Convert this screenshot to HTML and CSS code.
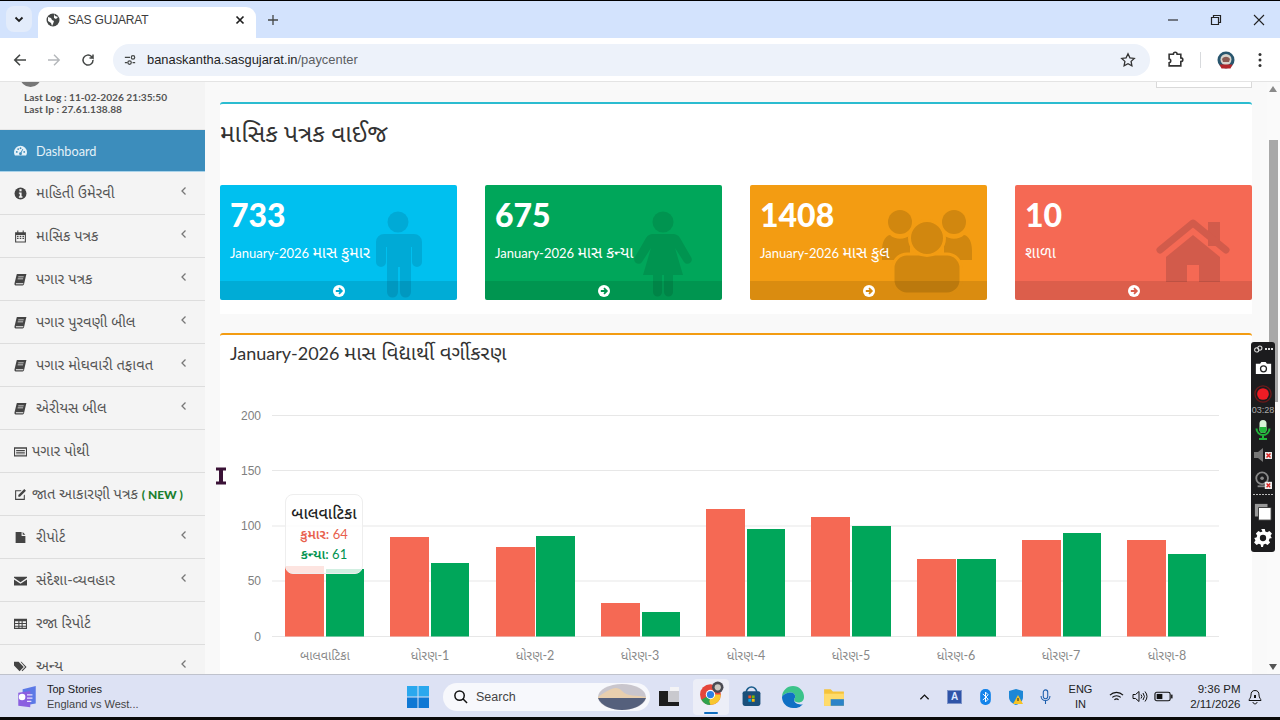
FILE: index.html
```html
<!DOCTYPE html>
<html lang="gu">
<head>
<meta charset="utf-8">
<title>SAS GUJARAT</title>
<link rel="stylesheet" href="styles.css">
</head>
<body>
<svg class="defs" aria-hidden="true">
  <symbol id="i-book" viewBox="0 0 12 12"><path d="M3 1h8.500l-.4 1.200L9.300 10.200c-.2.800-.6 1.300-1.400 1.300H1.600C.6 11.500.2 10.600.5 9.500L2.300 2C2.400 1.400 2.600 1 3 1zM4 3.200l-.2.800h5l.2-.800zM3.500 5l-.2.800h5l.2-.800zM1.800 9.400c-.2.600 0 .9.500.9h6.100l.3-.9z" fill-rule="evenodd"/></symbol>
  <symbol id="i-chev" viewBox="0 0 8 10"><path d="M5.500 1.500 2 5l3.500 3.500" fill="none" stroke="currentColor" stroke-width="1.300"/></symbol>
  <symbol id="i-go" viewBox="0 0 12 12"><circle cx="6" cy="6" r="6" fill="#fff"/><path d="M2.800 6h5.600M6 3.200 8.800 6 6 8.800" fill="none" stroke="currentColor" stroke-width="1.800"/></symbol>
</svg>

<div class="tabstrip">
  <div class="tab-menu"><svg viewBox="0 0 12 12" class="ic12"><path d="M2.500 4.500 6 8l3.500-3.500" fill="none" stroke="#1f1f1f" stroke-width="1.800"/></svg></div>
  <div class="tab">
    <svg viewBox="0 0 14 14" class="ic14"><circle cx="7" cy="7" r="6.500" fill="#444746"/><path d="M2 4l3 1 1 2 2 1-1 3-1 2-1-3-3-2zM8 1l1 2 3 1-2 2-2-1z" fill="#fff"/></svg>
    <span class="tab-title">SAS GUJARAT</span>
    <svg viewBox="0 0 10 10" class="ic10"><path d="M1.500 1.500l7 7m0-7l-7 7" stroke="#1f1f1f" stroke-width="1.700"/></svg>
  </div>
  <svg viewBox="0 0 12 12" class="tab-plus"><path d="M6 1v10M1 6h10" stroke="#444746" stroke-width="1.300"/></svg>
  <div class="win-ctrl">
    <svg viewBox="0 0 12 12" class="ic12"><path d="M1 6h10" stroke="#222" stroke-width="1.100"/></svg>
    <svg viewBox="0 0 12 12" class="ic12"><path d="M1.500 3.500h7v7h-7zM3.500 3.500v-2h7v7h-2" fill="none" stroke="#222" stroke-width="1.200"/></svg>
    <svg viewBox="0 0 12 12" class="ic12"><path d="M1 1l10 10M11 1L1 11" stroke="#222" stroke-width="1.100"/></svg>
  </div>
</div>

<div class="toolbar">
  <svg viewBox="0 0 14 14" class="ic14 nav"><path d="M13 7H2M7 1.800 1.800 7 7 12.200" fill="none" stroke="#444746" stroke-width="1.600"/></svg>
  <svg viewBox="0 0 14 14" class="ic14 nav"><path d="M1 7h11M7 1.800 12.200 7 7 12.200" fill="none" stroke="#b4b7ba" stroke-width="1.400"/></svg>
  <svg viewBox="0 0 14 14" class="ic14 nav"><path d="M12 7a5 5 0 1 1-1.500-3.500L12 5V1.500M12 5H8.500" fill="none" stroke="#444746" stroke-width="1.500"/></svg>
  <div class="omnibox">
    <span class="tune"><svg viewBox="0 0 14 14" class="ic14"><path d="M1 4h6M10 10h3M1 10h3" stroke="#444746" stroke-width="1.400"/><circle cx="10.500" cy="4" r="2" fill="none" stroke="#444746" stroke-width="1.400"/><circle cx="6.500" cy="10" r="2" fill="none" stroke="#444746" stroke-width="1.400"/></svg></span>
    <span class="url">banaskantha.sasgujarat.in<span class="url-path">/paycenter</span></span>
    <svg viewBox="0 0 16 16" class="star"><path d="M8 1.800l1.900 4 4.400.6-3.200 3 .8 4.400L8 11.700l-3.900 2.100.8-4.400-3.200-3 4.400-.6z" fill="none" stroke="#333" stroke-width="1.300"/></svg>
  </div>
  <svg viewBox="0 0 16 16" class="puzzle"><path d="M2 3h4c0-2.500 3.500-2.500 3.500 0h3.500v3.500c2.500 0 2.500 3.500 0 3.500V14H2v-3c2 0 2-3.500 0-3.500z" fill="none" stroke="#333" stroke-width="1.500"/></svg>
  <span class="tool-sep"></span>
  <svg viewBox="0 0 18 18" class="avatar"><circle cx="9" cy="9" r="8.500" fill="#29566e"/><circle cx="9" cy="8.500" r="5.500" fill="#d8d4cc"/><path d="M5 8c2-3 6-3 8 0l-1 3H6z" fill="#8a5a52"/><path d="M2.500 13.500h13l-2 4h-9z" fill="#b3262a"/></svg>
  <svg viewBox="0 0 4 16" class="dots"><circle cx="2" cy="2.500" r="1.500" fill="#333"/><circle cx="2" cy="8" r="1.500" fill="#333"/><circle cx="2" cy="13.500" r="1.500" fill="#333"/></svg>
</div>

<div class="page">
  <aside class="sidebar">
    <div class="user">
      <span class="user-pic"></span>
      <p>Last Log : 11-02-2026 21:35:50</p>
      <p>Last Ip : 27.61.138.88</p>
    </div>
    <ul class="menu">
      <li class="item active"><svg viewBox="0 0 14 12" class="mi"><path d="M7 1a7 7 0 0 0-7 7c0 1.300.4 2.500 1 3.500h12c.6-1 1-2.200 1-3.500a7 7 0 0 0-7-7z"/><g fill="#3c8dbc"><circle cx="3" cy="7.500" r="1"/><circle cx="4.500" cy="4.500" r="1"/><circle cx="7" cy="3.500" r="1"/><circle cx="11" cy="7.500" r="1"/><circle cx="7" cy="9.500" r="1.500"/></g><path d="M7 9.500l2.500-5" stroke="#3c8dbc" stroke-width="1"/></svg><span class="lbl">Dashboard</span></li>
      <li class="item"><svg viewBox="0 0 12 12" class="mi"><circle cx="6" cy="6" r="5.500"/><rect x="5" y="2" width="2" height="2" fill="#f4f4f4"/><path d="M4.500 5H7v3.500h.8V10H4.500V8.500h.8V6.300h-.8z" fill="#f4f4f4"/></svg><span class="lbl">માહિતી ઉમેરવી</span><svg class="chev"><use href="#i-chev"/></svg></li>
      <li class="item"><svg viewBox="0 0 12 12" class="mi"><path d="M1 2h2V.500h1V2h4V.500h1V2h2v9.500H1zM2 4.500v6h8v-6z" fill-rule="evenodd"/><path d="M2.800 5.300h1.400v1.200H2.800zm2.500 0h1.400v1.200H5.300zm2.500 0h1.400v1.200H7.800zM2.800 7.200h1.400v1.200H2.800zm2.500 0h1.400v1.200H5.300zm2.500 0h1.400v1.200H7.800z"/></svg><span class="lbl">માસિક પત્રક</span><svg class="chev"><use href="#i-chev"/></svg></li>
      <li class="item"><svg class="mi"><use href="#i-book"/></svg><span class="lbl">પગાર પત્રક</span><svg class="chev"><use href="#i-chev"/></svg></li>
      <li class="item"><svg class="mi"><use href="#i-book"/></svg><span class="lbl">પગાર પુરવણી બીલ</span><svg class="chev"><use href="#i-chev"/></svg></li>
      <li class="item"><svg class="mi"><use href="#i-book"/></svg><span class="lbl">પગાર મોઘવારી તફાવત</span><svg class="chev"><use href="#i-chev"/></svg></li>
      <li class="item"><svg class="mi"><use href="#i-book"/></svg><span class="lbl">એરીયસ બીલ</span><svg class="chev"><use href="#i-chev"/></svg></li>
      <li class="item tight"><svg viewBox="0 0 12 12" class="mi"><path d="M0 2h12v8.500H0zM1 3.500v6h10v-6z" fill-rule="evenodd"/><path d="M2 4.500h8v1H2zm0 1.700h8v1H2zm0 1.600h8v.8H2z"/></svg><span class="lbl">પગાર પોથી</span></li>
      <li class="item tight"><svg viewBox="0 0 12 12" class="mi"><path d="M1.500 2H7L6 3H2v7h7V7l1-1v5H1V2z"/><path d="M4 6.500 9.500 1 11 2.500 5.500 8H4z"/></svg><span class="lbl">જાત આકારણી પત્રક <b class="new">( NEW )</b></span></li>
      <li class="item"><svg viewBox="0 0 12 12" class="mi"><path d="M1.500 1H7v3.500h3.500V11h-9zM8 1l2.500 2.500H8z"/></svg><span class="lbl">રીપોર્ટ</span><svg class="chev"><use href="#i-chev"/></svg></li>
      <li class="item"><svg viewBox="0 0 12 12" class="mi"><path d="M0 2.500h12v1L6 7.500 0 3.500zM0 5l6 4 6-4v5.500H0z"/></svg><span class="lbl">સંદેશા-વ્યવહાર</span><svg class="chev"><use href="#i-chev"/></svg></li>
      <li class="item"><svg viewBox="0 0 12 12" class="mi"><path d="M0 1.500h12v9.500H0zM1 4v1.500h3V4zm4 0v1.500h2V4zm3 0v1.500h3V4zM1 6.500V8h3V6.500zm4 0V8h2V6.500zm3 0V8h3V6.500zM1 9v1h3V9zm4 0v1h2V9zm3 0v1h3V9z" fill-rule="evenodd"/></svg><span class="lbl">રજા રિપોર્ટ</span></li>
      <li class="item"><svg viewBox="0 0 14 12" class="mi"><path d="M0 1h5l5.500 5.500-4.500 4.500L0 5zM7 1h1l5.500 5.500-4.500 4.500-.8-.8 3.700-3.700z"/></svg><span class="lbl">અન્ય</span><svg class="chev"><use href="#i-chev"/></svg></li>
    </ul>
  </aside>

  <main class="content">
    <div class="top-stub"><span class="stub-box"></span></div>

    <section class="panel panel-teal">
      <h1 class="panel-h1">માસિક પત્રક વાઈજ</h1>
      <div class="cards">
        <article class="card c-blue">
          <svg viewBox="0 0 237 115" class="art"><circle cx="178" cy="37" r="10.500"/><path d="M162 49h32a8 8 0 0 1 8 8v20a5 5 0 0 1-10 0V62h-1v45a5.500 5.500 0 0 1-11 0V82h-2v25a5.500 5.500 0 0 1-11 0V62h-1v15a5 5 0 0 1-10 0V57a8 8 0 0 1 8-8z"/></svg>
          <div class="card-body"><div class="num">733</div><div class="cap">January-2026 <span class="gu">માસ કુમાર</span></div></div>
          <div class="card-foot"><svg class="go"><use href="#i-go"/></svg></div>
        </article>
        <article class="card c-green">
          <svg viewBox="0 0 237 115" class="art"><circle cx="178" cy="37" r="10.500"/><path d="M168 49h20c3 0 5 1 7 4l11 19a4 4 0 0 1-7 5l-9-14 8 27h-10v17a4.500 4.500 0 0 1-9 0V90h-2v17a4.500 4.500 0 0 1-9 0V90h-10l8-27-9 14a4 4 0 0 1-7-5l11-19c2-3 4-4 7-4z"/></svg>
          <div class="card-body"><div class="num">675</div><div class="cap">January-2026 <span class="gu">માસ કન્યા</span></div></div>
          <div class="card-foot"><svg class="go"><use href="#i-go"/></svg></div>
        </article>
        <article class="card c-amber">
          <svg viewBox="0 0 237 115" class="art"><circle cx="150" cy="37" r="12"/><circle cx="204" cy="37" r="12"/><path d="M132 66c0-9 3-15 8-16 5 5 15 5 20 0v25h-28zM194 50c5 5 15 5 20 0 5 1 8 7 8 16v9h-28z"/><rect x="143" y="69" width="68" height="40" rx="14" class="ring"/><circle cx="177" cy="53" r="17.500" class="ring"/></svg>
          <div class="card-body"><div class="num">1408</div><div class="cap">January-2026 <span class="gu">માસ કુલ</span></div></div>
          <div class="card-foot"><svg class="go"><use href="#i-go"/></svg></div>
        </article>
        <article class="card c-red">
          <svg viewBox="0 0 237 115" class="art"><rect x="193" y="37" width="12" height="24"/><path d="M178 50l27 22v25h-21V80h-12v17h-21V72z"/><path d="M145 65l33-27 33 27" class="roof"/></svg>
          <div class="card-body"><div class="num">10</div><div class="cap"><span class="gu">શાળા</span></div></div>
          <div class="card-foot"><svg class="go"><use href="#i-go"/></svg></div>
        </article>
      </div>
    </section>

    <section class="panel panel-amber">
      <h2 class="panel-h2">January-2026 <span class="gu-h">માસ વિદ્યાર્થી વર્ગીકરણ</span></h2>
      <div class="chart">
        <svg viewBox="0 0 1032 300" class="chart-svg">
          <g class="grid">
            <path d="M52 35.500H999M52 90.500H999M52 146H999M52 201H999M52 256.500H999"/>
          </g>
          <g class="ticks">
            <text x="41" y="40">200</text><text x="41" y="95">150</text><text x="41" y="150">100</text><text x="41" y="205">50</text><text x="41" y="261">0</text>
          </g>
          <g class="red">
            <rect x="65" y="186" width="39" height="70.500"/><rect x="170" y="157" width="39" height="99.500"/><rect x="276" y="167" width="39" height="89.500"/><rect x="381" y="223" width="39" height="33.500"/><rect x="486" y="129" width="39" height="127.500"/><rect x="591" y="137" width="39" height="119.500"/><rect x="697" y="179" width="39" height="77.500"/><rect x="802" y="160" width="39" height="96.500"/><rect x="907" y="160" width="39" height="96.500"/>
          </g>
          <g class="green">
            <rect x="106" y="189" width="38" height="67.500"/><rect x="211" y="183" width="38" height="73.500"/><rect x="316" y="156" width="39" height="100.500"/><rect x="422" y="232" width="38" height="24.500"/><rect x="527" y="149" width="38" height="107.500"/><rect x="632" y="146" width="39" height="110.500"/><rect x="737" y="179" width="39" height="77.500"/><rect x="843" y="153" width="38" height="103.500"/><rect x="948" y="174" width="38" height="82.500"/>
          </g>
          <g class="xlabels">
            <text x="105" y="280">બાલવાટિકા</text><text x="210" y="280">ધોરણ-1</text><text x="315" y="280">ધોરણ-2</text><text x="420" y="280">ધોરણ-3</text><text x="526" y="280">ધોરણ-4</text><text x="631" y="280">ધોરણ-5</text><text x="736" y="280">ધોરણ-6</text><text x="841" y="280">ધોરણ-7</text><text x="947" y="280">ધોરણ-8</text>
          </g>
        </svg>
        <div class="tooltip">
          <div class="tt-title">બાલવાટિકા</div>
          <div class="tt-row tt-red">કુમાર: <span>64</span></div>
          <div class="tt-row tt-green">કન્યા: <span>61</span></div>
        </div>
      </div>
    </section>
  </main>

  <div class="scrollbar">
    <span class="sb-up"></span>
    <span class="sb-thumb"></span>
    <span class="sb-down"></span>
  </div>

  <svg viewBox="0 0 12 18" class="ibeam"><path d="M1 .500h10v3H8v11h3v3H1v-3h3v-11H1z" fill="#3a1236"/></svg>

  <div class="recorder">
    <div class="rec-top"><svg viewBox="0 0 10 8" class="rec-link"><circle cx="3" cy="5" r="2.300" fill="none" stroke="#ddd" stroke-width="1.200"/><circle cx="6.500" cy="3" r="2.300" fill="none" stroke="#ddd" stroke-width="1.200"/></svg><span class="rec-dots"></span></div>
    <svg viewBox="0 0 20 16" class="rec-i"><path d="M1 3h5l1.500-2h5L14 3h5v12H1z" fill="#fff"/><circle cx="10" cy="9" r="3.500" fill="none" stroke="#222" stroke-width="1.500"/></svg>
    <svg viewBox="0 0 20 20" class="rec-i rec-r"><circle cx="10" cy="10" r="9" fill="none" stroke="#6b1a1a" stroke-width="1.500"/><circle cx="10" cy="10" r="6.500" fill="#ee1c25"/></svg>
    <span class="rec-time">03:28</span>
    <svg viewBox="0 0 20 20" class="rec-i rec-m"><rect x="6.500" y="0" width="7" height="13" rx="3.500" fill="#d8f5d8"/><path d="M6.500 7h7v2.500a3.500 3.500 0 0 1-7 0z" fill="#22b53b"/><path d="M3.500 8.500a6.500 6.500 0 0 0 13 0M10 15v4M6 19h8" fill="none" stroke="#22b53b" stroke-width="2"/></svg>
    <svg viewBox="0 0 20 16" class="rec-i rec-s"><path d="M1 5h4l5-4v14l-5-4H1z" fill="#777"/><rect x="12" y="5" width="7" height="7" fill="#e8e8e8"/><path d="M13.500 6.500l4 4m0-4l-4 4" stroke="#d22" stroke-width="1.500"/></svg>
    <svg viewBox="0 0 20 20" class="rec-i rec-c"><circle cx="9" cy="8" r="6.500" fill="none" stroke="#888" stroke-width="2"/><circle cx="9" cy="8" r="2" fill="#888"/><path d="M4 17h10" stroke="#888" stroke-width="2"/><rect x="12" y="12" width="8" height="8" fill="#eee"/><path d="M14 14l4 4m0-4l-4 4" stroke="#d22" stroke-width="1.500"/></svg>
    <span class="rec-rule"></span>
    <svg viewBox="0 0 20 20" class="rec-i rec-w"><path d="M1 1h14v14H1z" fill="#999"/><path d="M5 5h14v14H5z" fill="#fff" stroke="#333"/></svg>
    <svg viewBox="0 0 20 20" class="rec-i rec-g"><path d="M8 0h4l.6 2.800 2.100.9 2.400-1.500 2.800 2.800-1.500 2.400.9 2.100L20 10v.1l-2.700.5-.9 2.100 1.500 2.400-2.800 2.800-2.400-1.500-2.100.9L10 20l-2-.1-.6-2.600-2.100-.9-2.400 1.500-2.800-2.800 1.500-2.400-.9-2.100L0 10l2.700-.5.900-2.100L2.100 5l2.800-2.800 2.400 1.500 2.100-.9zM10 6.500a3.500 3.500 0 1 0 0 7 3.500 3.500 0 0 0 0-7z" fill="#fff" fill-rule="evenodd"/></svg>
  </div>
</div>

<footer class="taskbar">
  <div class="news">
    <svg viewBox="0 0 20 22" class="news-i"><path d="M6 4l12-3v16L6 19z" fill="#5c79e6"/><path d="M2 7l11-1.500v15L2 19z" fill="#8b5fe0"/><circle cx="5.500" cy="11" r="3" fill="#fff"/><path d="M10 9h5M10 12h5M10 15h4" stroke="#e8e0ff" stroke-width="1.200"/></svg>
    <div class="news-t"><div class="news-a">Top Stories</div><div class="news-b">England vs West...</div></div>
  </div>
  <div class="center">
    <svg viewBox="0 0 22 22" class="win"><rect x="0" y="0" width="10.500" height="10.500" fill="#2aa8ee"/><rect x="11.500" y="0" width="10.500" height="10.500" fill="#2aa8ee"/><rect x="0" y="11.500" width="10.500" height="10.500" fill="#0f78d4"/><rect x="11.500" y="11.500" width="10.500" height="10.500" fill="#0f78d4"/></svg>
    <div class="search">
      <svg viewBox="0 0 16 16" class="search-i"><circle cx="7" cy="7" r="5" fill="none" stroke="#111" stroke-width="1.600"/><path d="M10.500 10.500 15 15" stroke="#111" stroke-width="1.600"/></svg>
      <span class="search-t">Search</span>
      <svg viewBox="0 0 48 28" class="search-art"><ellipse cx="24" cy="14" rx="24" ry="13" fill="#c9c6cd"/><path d="M0 14c12-8 18-12 24-6s14 4 24 6v2H0z" fill="#e8cfae"/><path d="M0 15h48c-3 8-14 12-24 12S3 23 0 15z" fill="#55607c"/></svg>
    </div>
    <svg viewBox="0 0 22 21" class="tb-a"><path d="M12 1h9v10h-9z" fill="#f3f3f5"/><path d="M1 5h9v11h11v4H1z" fill="#1d1d1d"/><path d="M10 5h11v11H10z" fill="#c9c9ce"/></svg>
    <div class="chrome-slot">
      <svg viewBox="0 0 24 24" class="chrome"><circle cx="11" cy="13" r="10" fill="#e5463a"/><path d="M11 13 2.300 18A10 10 0 0 0 11 23l5-9z" fill="#2fa24d"/><path d="M11 13h10a10 10 0 0 1-10 10l-1-3z" fill="#f8c72e"/><circle cx="11" cy="13" r="4.500" fill="#fff"/><circle cx="11" cy="13" r="3.500" fill="#2d7fe3"/><circle cx="18" cy="6" r="5.500" fill="#4a4a52"/><circle cx="18" cy="6" r="3" fill="#cbc7c0"/></svg>
      <span class="chrome-bar"></span>
    </div>
    <svg viewBox="0 0 20 20" class="tb-b"><path d="M5 6a5 5 0 0 1 10 0" fill="none" stroke="#1a5d8c" stroke-width="1.500"/><rect x="1.500" y="5" width="17" height="14" rx="2" fill="#1a4f7a"/><rect x="7" y="9" width="2.700" height="2.700" fill="#f25022"/><rect x="10.300" y="9" width="2.700" height="2.700" fill="#7fba00"/><rect x="7" y="12.300" width="2.700" height="2.700" fill="#00a4ef"/><rect x="10.300" y="12.300" width="2.700" height="2.700" fill="#ffb900"/></svg>
    <svg viewBox="0 0 20 20" class="tb-c"><path d="M10 0a10 10 0 0 1 10 10c0 3-2 5-5 5-2 0-4-1-4-2.500 0-1 1-1.500 1-3 0-2-2-3.500-4-3.500C4 6 1 8 0 10A10 10 0 0 1 10 0z" fill="#3bc38a"/><path d="M0 10c1-2 4-4 8-4 2 0 4 1.500 4 3.500 0 1.500-1 2-1 3 0 3 4 5 8 4a10 10 0 0 1-9 3.500C4 20 0 15 0 10z" fill="#0f70c4"/></svg>
    <svg viewBox="0 0 20 20" class="tb-d"><path d="M1 3h6l2 2h10v13H1z" fill="#f5c33b"/><path d="M1 7h18v11H1z" fill="#ffdb6a"/><rect x="7" y="12" width="12" height="6" fill="#2b83c8"/></svg>
  </div>
  <div class="tray">
    <svg viewBox="0 0 12 8" class="t-caret"><path d="M1.500 6.500 6 2l4.500 4.500" fill="none" stroke="#111" stroke-width="1.400"/></svg>
    <span class="t-a">A</span>
    <svg viewBox="0 0 12 18" class="t-bt"><rect x="0" y="0" width="12" height="18" rx="5.500" fill="#1383ea"/><path d="M3 5.500l6 6-3 3v-11l3 3-6 6" fill="none" stroke="#fff" stroke-width="1.100"/></svg>
    <svg viewBox="0 0 14 16" class="t-sh"><path d="M7 0l7 2v6c0 4-3 6.500-7 8-4-1.500-7-4-7-8V2z" fill="#1d87d6"/><path d="M9 6l5 9H4z" fill="#f7c325"/><rect x="8.500" y="9" width="1" height="3" fill="#222"/></svg>
    <svg viewBox="0 0 12 18" class="t-mic"><rect x="3.500" y="1" width="5" height="10" rx="2.500" fill="none" stroke="#1b5dac" stroke-width="1.200"/><path d="M1 8a5 5 0 0 0 10 0M6 13v4" fill="none" stroke="#1b5dac" stroke-width="1.200"/></svg>
    <div class="t-lang">ENG<br>IN</div>
    <svg viewBox="0 0 16 13" class="t-wifi"><path d="M1 5a10 10 0 0 1 14 0M3.500 7.500a6.500 6.500 0 0 1 9 0M5.800 10a3 3 0 0 1 4.400 0" fill="none" stroke="#111" stroke-width="1.200"/></svg>
    <svg viewBox="0 0 16 13" class="t-spk"><path d="M1 4.500h2.500L7 1.500v10l-3.500-3H1z" fill="none" stroke="#111"/><path d="M9 4.500a3 3 0 0 1 0 4M11 3a5.500 5.500 0 0 1 0 7M13 1.500a8 8 0 0 1 0 10" fill="none" stroke="#111"/></svg>
    <svg viewBox="0 0 20 11" class="t-bat"><rect x="1" y="1" width="16" height="9" rx="2" fill="none" stroke="#111" stroke-width="1.200"/><rect x="2.800" y="2.800" width="6" height="5.400" fill="#111"/><rect x="18" y="3.500" width="1.500" height="4" fill="#111"/></svg>
    <div class="t-time">9:36 PM<br>2/11/2026</div>
    <svg viewBox="0 0 14 16" class="t-bell"><path d="M7 1.500c-3 0-4 2-4 4.500 0 3-2 4-2 5.500h12c0-1.500-2-2.500-2-5.500 0-2.500-1-4.500-4-4.500zM5 13c0 2.500 4 2.500 4 0" fill="none" stroke="#111"/><path d="M6 6h2v3H6z" fill="#111"/></svg>
  </div>
</footer>
</body>
</html>
```
FILE: styles.css
```css
* { box-sizing: border-box; }
html, body { margin: 0; padding: 0; }
body {
  width: 1280px; height: 720px; overflow: hidden;
  display: flex; flex-direction: column;
  border-top: 1px solid #000; border-bottom: 3px solid #0a0a0a;
  font-family: "Lato", "Noto Sans", "Noto Sans Gujarati", "Lohit Gujarati", sans-serif;
  color: #333; background: #fff;
}
.defs { position: absolute; width: 0; height: 0; }
svg { display: block; flex: none; }
.ic10 { width: 10px; height: 10px; }
.ic12 { width: 12px; height: 12px; }
.ic14 { width: 14px; height: 14px; }

/* browser */
.tabstrip { height: 37px; background: #d3e3fd; display: flex; align-items: flex-end; padding-left: 6px; flex: none; }
.tab-menu { width: 26px; height: 26px; margin-bottom: 6px; border-radius: 8px; background: #e3ecfb; display: flex; align-items: center; justify-content: center; }
.tab { width: 218px; height: 31px; margin-left: 6px; background: #fff; border-radius: 10px 10px 0 0; display: flex; align-items: center; padding: 0 11px 5px 8px; }
.tab-title { flex: 1; margin-left: 8px; font: 12px "Liberation Sans", sans-serif; color: #3c3c3c; letter-spacing: -.2px; }
.tab-plus { width: 12px; height: 12px; margin: 0 0 12px 11px; }
.win-ctrl { margin-left: auto; display: flex; gap: 31px; padding: 0 15px 0 0; margin-bottom: 12px; }

.toolbar { height: 43px; background: #fff; display: flex; align-items: center; padding: 0 14px 0 13px; flex: none; border-radius: 8px 8px 0 0; }
.nav { margin-right: 20px; }
.omnibox { width: 1037px; height: 32px; margin-left: -2px; border-radius: 16px; background: #edf2fa; display: flex; align-items: center; padding: 0 14px 0 7px; }
.tune { width: 20px; height: 20px; display: flex; align-items: center; justify-content: center; }
.tune svg { width: 12px; height: 12px; }
.url { flex: 1; margin-left: 7px; font: 12.900px "Liberation Sans", sans-serif; color: #1f1f1f; }
.url-path { color: #5b5e62; }
.star { width: 16px; height: 16px; }
.puzzle { width: 17px; height: 17px; margin-left: 17px; }
.tool-sep { width: 1px; height: 16px; background: #d8dadd; margin-left: 16px; }
.avatar { width: 18px; height: 18px; margin-left: 16px; }
.dots { width: 4px; height: 16px; margin-left: 23px; }

/* page */
.page { flex: 1; min-height: 0; display: flex; position: relative; overflow: hidden; border-top: 1px solid #e4e4e4; background: #f9f9f9; }
.sidebar { width: 205px; flex: none; background: #f4f4f4; overflow: hidden; }
.user { height: 48px; padding: 10px 0 0 24px; position: relative; overflow: hidden; border-bottom: 1px solid #e6e6e6; }
.user p { margin: 0; font-size: 10.200px; line-height: 11.500px; font-weight: 700; color: #555; }
.user-pic { position: absolute; left: 20px; top: -16px; width: 21px; height: 21px; border-radius: 50%; background: #777; }
.menu { list-style: none; margin: 0; padding: 0; }
.item { height: 43px; display: flex; align-items: center; padding: 0 0 0 14px; border-bottom: 1px solid #ddd; font-size: 14.700px; color: #444; position: relative; }
.lbl { margin-left: 9px; white-space: nowrap; color: #555; position: relative; top: .5px; }
.item .mi { width: 13px; height: 13px; fill: #444; }
.item.tight .lbl { margin-left: 5px; }
.item.active { height: 42px; background: #3c8dbc; border-bottom: 1px solid #a9d3ea; font-size: 12.700px; }
.item.active .lbl { color: #e4f1f8; }
.item.active .mi { fill: #e4f1f8; }
.new { color: #1a7f2e; font-size: 12px; font-weight: 900; }
.chev { width: 8px; height: 10px; position: absolute; left: 180px; top: 14px; color: #777; }

.content { flex: 1; min-width: 0; padding: 0 15px; }
.top-stub { height: 20px; display: flex; justify-content: flex-end; }
.stub-box { width: 96px; height: 6px; background: #fff; border: 1px solid #d9d9d9; border-top: 0; }
.panel { background: #fff; }
.panel-teal { height: 212px; border-top: 2px solid #2bbcd0; border-radius: 3px 3px 0 0; padding-top: 12px; }
.panel-h1 { margin: 0; font-size: 24.600px; font-weight: 400; line-height: 34px; color: #333; white-space: nowrap; }
.cards { display: grid; grid-template-columns: repeat(4, 237px); column-gap: 28px; margin-top: 35px; }
.card { height: 115px; border-radius: 2px; position: relative; overflow: hidden; color: #fff; }
.art { position: absolute; inset: 0; width: 100%; height: 100%; }
.card-body { position: relative; padding: 13px 0 0 10px; }
.num { font-size: 32px; font-weight: 900; line-height: 34px; }
.cap { margin-top: 10px; font-size: 13px; line-height: 20px; white-space: nowrap; }
.gu { font-size: 15.800px; }
.card-foot { position: absolute; left: 0; right: 0; bottom: 0; height: 19px; background: rgba(0,0,0,.1); display: flex; align-items: center; justify-content: center; }
.go { width: 12px; height: 12px; }
.c-blue { background: #00c0ef; } .c-blue .art { fill: #00aad6; } .c-blue .go { color: #00a9d3; }
.c-green { background: #00a65a; } .c-green .art { fill: #009450; } .c-green .go { color: #00924f; }
.c-amber { background: #f39c12; } .c-amber .art { fill: #d1870f; } .c-amber .go { color: #d68910; }
.c-red { background: #f56954; } .c-red .art { fill: #d25b4b; } .c-red .go { color: #d95d4b; }
.ring { stroke: #f39c12; stroke-width: 3; }
.roof { fill: none; stroke: #d25b4b; stroke-width: 7; stroke-linecap: round; stroke-linejoin: round; }

.panel-amber { margin-top: 19px; border-top: 2px solid #f39c12; border-radius: 3px 3px 0 0; height: 400px; padding-top: 3px; position: relative; }
.panel-h2 { margin: 0 0 0 10px; font-size: 18px; font-weight: 400; line-height: 28px; color: #333; white-space: nowrap; }
.gu-h { font-size: 20.400px; }
.chart { margin-top: 13px; }
.chart-svg { width: 1032px; height: 300px; }
.grid path { stroke: #e7e7e7; stroke-width: 1; fill: none; }
.ticks text { font-size: 12px; fill: #808080; text-anchor: end; font-family: "Liberation Sans", sans-serif; }
.xlabels text { font-size: 12.500px; fill: #888; text-anchor: middle; }
.red { fill: #f56954; }
.green { fill: #00a65a; }
.tooltip { position: absolute; left: 65px; top: 159px; width: 78px; height: 80px; background: rgba(255,255,255,.82); border: 1px solid #eee; border-radius: 8px; text-align: center; padding-top: 6px; }
.tt-title { font-size: 16px; line-height: 23px; font-weight: 500; color: #222; }
.tt-row { font-size: 13.500px; line-height: 20px; font-weight: 600; }
.tt-row span { font-weight: 400; font-size: 13px; }
.tt-red { color: #e8604d; }
.tt-green { color: #00934f; }

.scrollbar { width: 13px; flex: none; background: #fafafa; position: relative; }
.sb-up, .sb-down { position: absolute; left: 2px; width: 0; height: 0; border-left: 4.500px solid transparent; border-right: 4.500px solid transparent; }
.sb-up { top: 4px; border-bottom: 6px solid #8a8a8a; }
.sb-down { bottom: 4px; border-top: 6px solid #555; }
.sb-thumb { position: absolute; left: 2px; top: 58px; width: 9px; height: 262px; background: #a8a8a8; }

.ibeam { position: absolute; left: 215px; top: 385px; width: 12px; height: 18px; }

.recorder { position: absolute; left: 1251px; top: 260px; width: 24px; height: 210px; background: #1c1c1e; border-radius: 3px; display: flex; flex-direction: column; align-items: center; }
.rec-top { display: flex; align-items: center; gap: 2px; height: 13px; }
.rec-link { width: 9px; height: 8px; }
.rec-dots { width: 8px; height: 2px; background: repeating-linear-gradient(90deg,#ddd 0 2px,transparent 2px 3px); }
.rec-i { width: 17px; height: 14px; margin-top: 6px; }
.rec-r { width: 18px; height: 18px; margin-top: 10px; }
.rec-time { font: 9px/10px "Liberation Sans", sans-serif; color: #aaa; margin-top: 2px; }
.rec-m { width: 20px; height: 20px; margin-top: 5px; }
.rec-s { width: 20px; height: 16px; margin-top: 7px; }
.rec-c { width: 18px; height: 18px; margin-top: 8px; }
.rec-rule { width: 20px; height: 1px; margin-top: 5px; background: repeating-linear-gradient(90deg,#bbb 0 2px,transparent 2px 3px); }
.rec-w { width: 18px; height: 18px; margin-top: 8px; }
.rec-g { width: 18px; height: 18px; margin-top: 8px; }

/* taskbar */
.taskbar { height: 43px; flex: none; background: #dde2f4; border-top: 1px solid #bfc2cc; display: flex; align-items: center; position: relative; padding-top: 1px; }
.news { display: flex; align-items: center; width: 407px; padding-left: 16px; }
.news-i { width: 22px; height: 24px; }
.news-t { margin-left: 9px; font: 11px/15px "Liberation Sans", sans-serif; }
.news-a { color: #1a1a1a; }
.news-b { color: #444; }
.center { display: flex; align-items: center; }
.win { width: 22px; height: 22px; }
.search { width: 207px; height: 28px; margin-left: 14px; background: #f7f8fc; border-radius: 14px; display: flex; align-items: center; padding-left: 10px; overflow: hidden; }
.search-i { width: 15px; height: 15px; }
.search-t { margin-left: 8px; flex: 1; font: 12.500px "Liberation Sans", sans-serif; color: #444; }
.search-art { width: 50px; height: 28px; margin-right: 3px; }
.tb-a { width: 22px; height: 21px; margin-left: 8px; }
.chrome-slot { width: 36px; height: 36px; margin-left: 13px; background: #eceef7; border-radius: 4px; position: relative; display: flex; justify-content: center; padding-top: 2px; }
.chrome { width: 25px; height: 25px; }
.chrome-bar { position: absolute; left: 11px; bottom: 1px; width: 14px; height: 2px; background: #0f6cbd; border-radius: 1px; }
.tb-b { width: 21px; height: 21px; margin-left: 12px; }
.tb-c { width: 22px; height: 22px; margin-left: 20px; }
.tb-d { width: 22px; height: 22px; margin-left: 19px; }
.tray { position: absolute; left: 919px; right: 0; top: 1px; bottom: 0; display: flex; align-items: center; }
.t-caret { width: 11px; height: 8px; }
.t-a { width: 15px; height: 14px; margin-left: 17px; background: #2f54a8; color: #dfe8ff; font: 700 10px/12px "Liberation Sans", sans-serif; text-align: center; border: 1px solid #7d93c9; }
.t-bt { width: 11px; height: 16px; margin-left: 18px; }
.t-sh { width: 14px; height: 16px; margin-left: 17.500px; }
.t-mic { width: 11px; height: 16px; margin-left: 17.500px; }
.t-lang { width: 40px; margin-left: 9.500px; text-align: center; font: 11px/15px "Liberation Sans", sans-serif; color: #222; }
.t-wifi { width: 15px; height: 13px; margin-left: 8.500px; }
.t-spk { width: 16px; height: 13px; margin-left: 7.500px; }
.t-bat { width: 19px; height: 11px; margin-left: 6px; }
.t-time { width: 60px; margin-left: 8px; text-align: right; font: 11.500px/15px "Liberation Sans", sans-serif; color: #222; }
.t-bell { width: 14px; height: 16px; margin-left: 7px; }
```
